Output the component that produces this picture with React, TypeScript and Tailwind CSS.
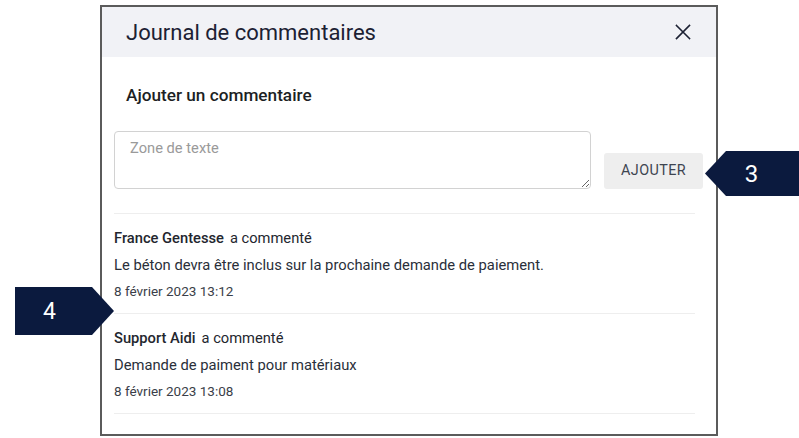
import React from 'react'

const comments = [
  {
    author: 'France Gentesse',
    text: 'Le béton devra être inclus sur la prochaine demande de paiement.',
    date: '8 février 2023 13:12',
  },
  {
    author: 'Support Aidi',
    text: 'Demande de paiment pour matériaux',
    date: '8 février 2023 13:08',
  },
]

function CloseIcon() {
  return (
    <svg width="16" height="16" viewBox="0 0 16 16" fill="none" stroke="#1c2133" strokeWidth="1.6" strokeLinecap="square">
      <path d="M1.5 1.5 L14.5 14.5 M14.5 1.5 L1.5 14.5" />
    </svg>
  )
}

function CommentItem({ c }: { c: (typeof comments)[number] }) {
  return (
    <div className="border-t border-[#eeeeee] pt-[14px] pb-[13px]">
      <div className="text-[14.7px] leading-[20px] text-[#23262e]">
        <span className="font-medium">{c.author}</span>
        <span className="ml-[6px]">a commenté</span>
      </div>
      <div className="mt-[7px] text-[14.75px] leading-[20px] text-[#2a2f3a]">{c.text}</div>
      <div className="mt-[7px] text-[13.5px] leading-[18px] text-[#3a3e48]">{c.date}</div>
    </div>
  )
}

export default function App() {
  return (
    <div className="relative w-[799px] h-[438px] bg-white overflow-hidden font-['Roboto',sans-serif]">
      <div className="ml-[100px] mt-[5px] w-[618px] h-[431px] border-2 border-[#5b5b5b] bg-white flex flex-col">
        <div className="h-[50px] bg-[#f1f2f6] flex items-center justify-between pl-[24px] pr-[25px]">
          <h1 className="text-[22px] text-[#1c2133]">Journal de commentaires</h1>
          <CloseIcon />
        </div>

        <div className="pt-[26px] px-[12px]">
          <h2 className="pl-[12px] text-[17.2px] leading-[24px] font-medium text-[#1d1f24]">Ajouter un commentaire</h2>

          <div className="mt-[24px] flex items-end gap-[13px]">
            <textarea
              placeholder="Zone de texte"
              className="w-[477px] h-[58px] border border-[#d2d2d2] rounded-[4px] pl-[15px] pt-[6px] text-[14.7px] leading-[20px] placeholder:text-[#9a9a9a] outline-none"
            />
            <button className="w-[99px] h-[36px] rounded-[3px] bg-[#eeeeee] text-[14.4px] tracking-[0.4px] text-[#3d4450]">
              AJOUTER
            </button>
          </div>

          <div className="mt-[24px] mr-[9px]">
            {comments.map(c => (
              <CommentItem key={c.date} c={c} />
            ))}
            <div className="border-t border-[#eeeeee]" />
          </div>
        </div>
      </div>

      <div className="absolute left-[705px] top-[151px] w-[94px] h-[45px] bg-[#0b1a3e] [clip-path:polygon(0_50%,21px_0,100%_0,100%_100%,21px_100%)] flex items-center justify-center pl-[11px]">
        <span className="text-white text-[24px] leading-none pr-[12px]">3</span>
      </div>

      <div className="absolute left-[15px] top-[287px] w-[99px] h-[48px] bg-[#0b1a3e] [clip-path:polygon(0_0,77px_0,100%_50%,77px_100%,0_100%)] flex items-center pl-[28px]">
        <span className="text-white text-[23px] leading-none">4</span>
      </div>
    </div>
  )
}
